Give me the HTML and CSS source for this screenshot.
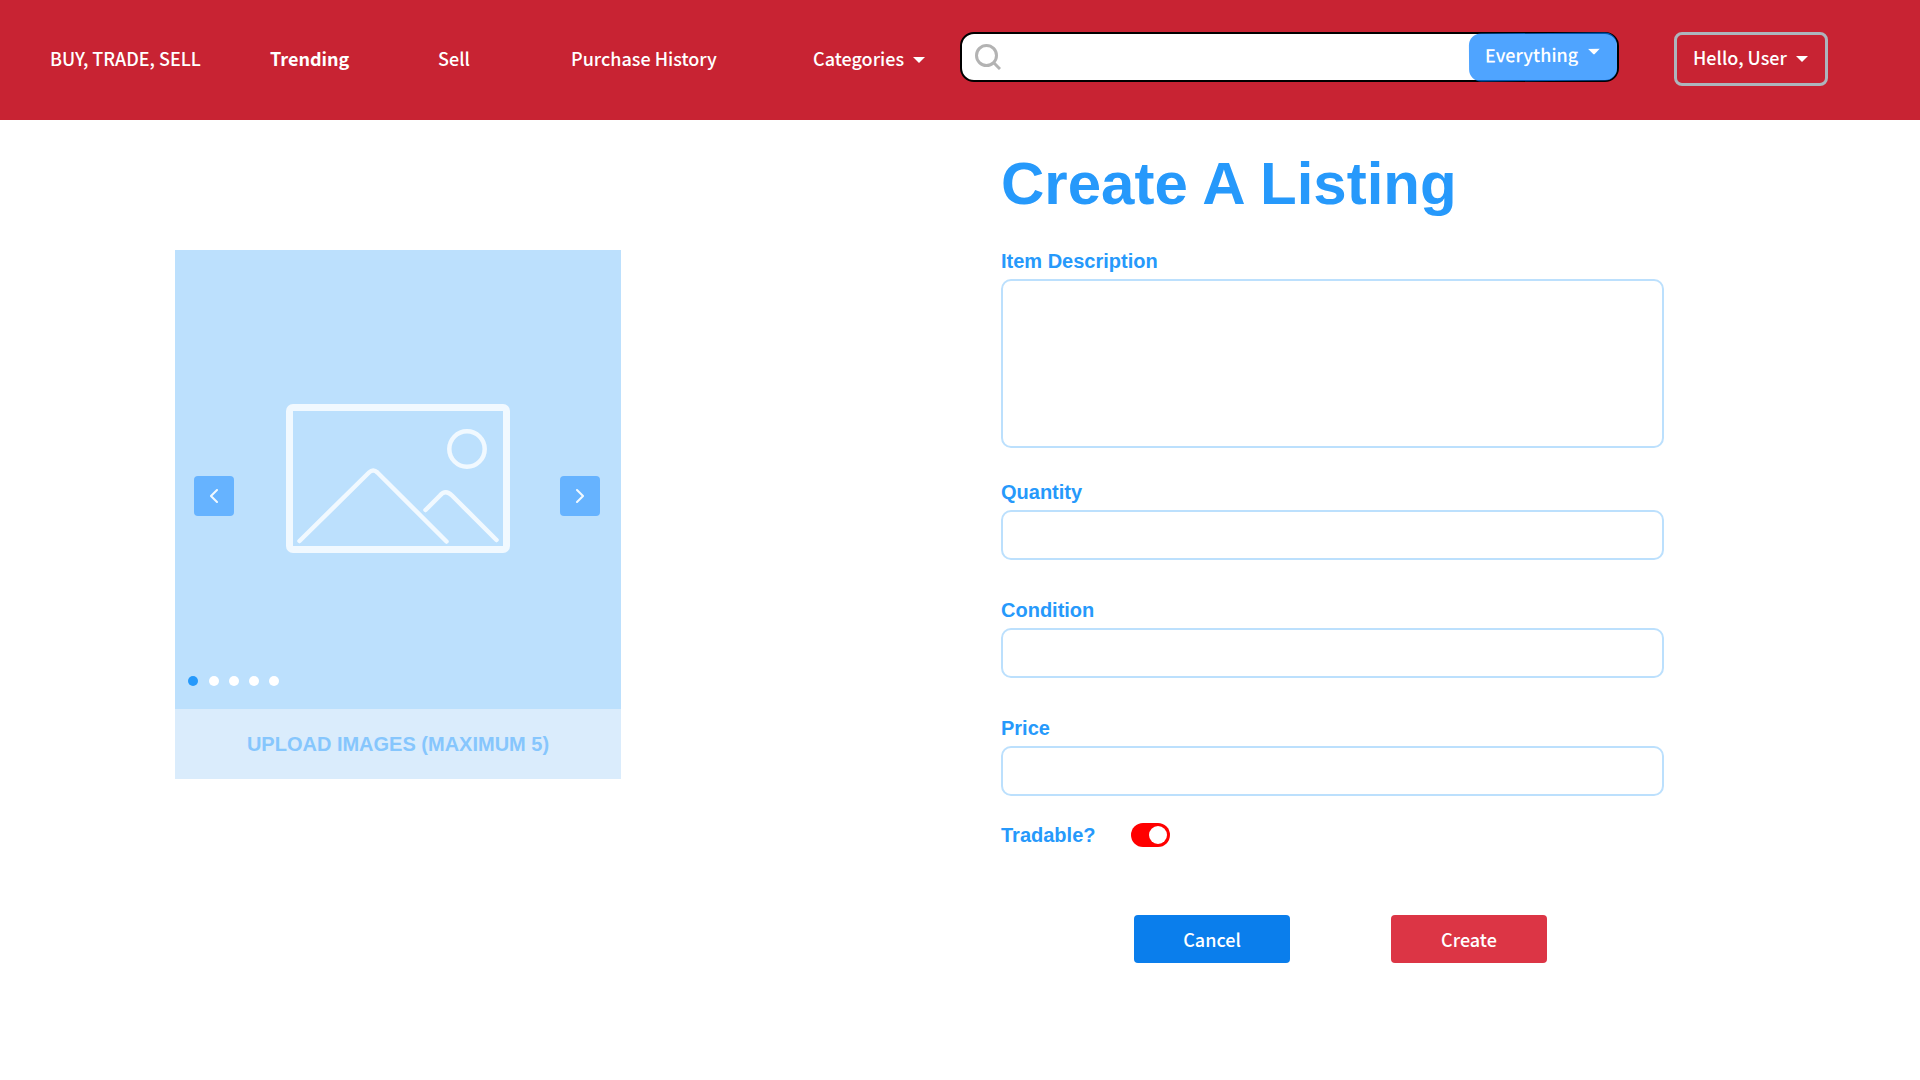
FILE: index.html
```html
<!DOCTYPE html>
<html lang="en">
<head>
<meta charset="utf-8">
<meta name="viewport" content="width=device-width, initial-scale=1">
<title>Create A Listing</title>
<link rel="stylesheet" href="styles.css">
</head>
<body>
<header class="topbar">
  <nav class="nav">
    <a class="nav-link" href="#">BUY, TRADE, SELL</a>
    <a class="nav-link nav-link-active" href="#">Trending</a>
    <a class="nav-link" href="#">Sell</a>
    <a class="nav-link" href="#">Purchase History</a>
    <button class="nav-link menu-button" type="button">Categories
      <svg class="caret" viewBox="0 0 12 6" aria-hidden="true"><path d="M0 0h12L6 6z"/></svg>
    </button>
  </nav>
  <form class="search" role="search">
    <svg class="search-icon" viewBox="0 0 26 26" fill="none" aria-hidden="true"><circle cx="11.500" cy="11.500" r="10"/><path d="M18.500 18.500l6.500 6.500"/></svg>
    <input class="search-input" type="search" aria-label="Search">
    <div class="scope">
      <select class="scope-select" aria-label="Search in"><option>Everything</option></select>
      <svg class="caret scope-caret" viewBox="0 0 12 6" aria-hidden="true"><path d="M0 0h12L6 6z"/></svg>
    </div>
  </form>
  <button class="user-button menu-button" type="button">Hello, User
    <svg class="caret" viewBox="0 0 12 6" aria-hidden="true"><path d="M0 0h12L6 6z"/></svg>
  </button>
</header>
<main class="page">
  <section class="gallery">
    <div class="slide">
      <svg class="placeholder" viewBox="0 0 224 150" fill="none" aria-hidden="true">
        <rect x="3.500" y="3.500" width="217" height="142" rx="3.500" stroke-width="7"/>
        <circle cx="181" cy="45" r="17.700"/>
        <path d="M13.500 137L83 68.500Q87.200 64.500 91.400 68.500L160.500 137.500"/>
        <path d="M139.500 106L154 91.500Q159.500 85 166 91.500L210.500 136"/>
      </svg>
      <button class="arrow arrow-prev" type="button" aria-label="Previous image">
        <svg class="chevron" viewBox="0 0 8 14" fill="none"><path d="M7 1L1 7l6 6"/></svg>
      </button>
      <button class="arrow arrow-next" type="button" aria-label="Next image">
        <svg class="chevron" viewBox="0 0 8 14" fill="none"><path d="M1 1l6 6-6 6"/></svg>
      </button>
      <div class="dots">
        <button class="dot dot-active" type="button" aria-label="Image 1"></button>
        <button class="dot" type="button" aria-label="Image 2"></button>
        <button class="dot" type="button" aria-label="Image 3"></button>
        <button class="dot" type="button" aria-label="Image 4"></button>
        <button class="dot" type="button" aria-label="Image 5"></button>
      </div>
    </div>
    <button class="upload" type="button">UPLOAD IMAGES (MAXIMUM 5)</button>
  </section>
  <form class="listing">
    <h1 class="title">Create A Listing</h1>
    <div class="field">
      <label class="label" for="description">Item Description</label>
      <textarea class="control control-tall" id="description"></textarea>
    </div>
    <div class="field">
      <label class="label" for="quantity">Quantity</label>
      <input class="control" id="quantity" type="text">
    </div>
    <div class="field">
      <label class="label" for="condition">Condition</label>
      <input class="control" id="condition" type="text">
    </div>
    <div class="field">
      <label class="label" for="price">Price</label>
      <input class="control" id="price" type="text">
    </div>
    <div class="toggle-row">
      <label class="label" for="tradable">Tradable?</label>
      <input class="toggle" id="tradable" type="checkbox" role="switch" checked>
    </div>
    <div class="actions">
      <button class="button button-cancel" type="button">Cancel</button>
      <button class="button button-create" type="button">Create</button>
    </div>
  </form>
</main>
</body>
</html>
```
FILE: styles.css
```css
* { box-sizing: border-box; }

body {
  margin: 0;
  background: #fff;
  color: #2699fb;
  font: 20px/24px "Liberation Sans", Arial, sans-serif;
}

button, select, input, textarea { font: inherit; margin: 0; }
button { padding: 0; border: 0; cursor: pointer; }

/* Top bar */
.topbar {
  display: flex;
  align-items: flex-start;
  min-height: 120px;
  padding: 32px 92px 32px 50px;
  background: #c82333;
  color: #fff;
  font: 500 18px/24px "Noto Sans CJK SC", sans-serif;
}

.nav {
  display: grid;
  grid-template-columns: 220px 168px 133px 242px 147px;
  align-items: center;
  height: 52px;
}

.nav-link {
  color: #fff;
  text-decoration: none;
  white-space: nowrap;
}

.nav-link-active { font-weight: 700; }

.menu-button {
  display: flex;
  align-items: center;
  gap: 9px;
  background: none;
  color: #fff;
  white-space: nowrap;
}

.caret {
  width: 12px;
  height: 6px;
  margin-top: 4px;
  fill: #fff;
}

.search {
  display: flex;
  flex: 1;
  align-items: center;
  min-width: 300px;
  height: 50px;
  margin-right: 55px;
  padding-left: 13px;
  border: 2px solid #000;
  border-radius: 14px;
  background: #fff;
}

.search-icon {
  width: 26px;
  height: 26px;
  stroke: #b3b3b3;
  stroke-width: 3;
}

.search-input {
  flex: 1;
  min-width: 0;
  height: 44px;
  border: 0;
  outline: 0;
  background: none;
}

.scope {
  position: relative;
  width: 148px;
  height: 48px;
  border-radius: 12px;
  background: rgba(0, 123, 255, 0.69);
  transform: rotate(-0.4deg);
}

.scope-select {
  display: block;
  width: 100%;
  height: 42px;
  padding: 0 0 0 16px;
  border: 0;
  appearance: none;
  background: none;
  color: #fff;
}

.scope-caret {
  position: absolute;
  top: 12px;
  right: 17px;
}

.user-button {
  width: 154px;
  height: 54px;
  padding: 0 0 5px 16px;
  border: 3px solid #adb5bd;
  border-radius: 8px;
}

/* Page columns */
.page {
  display: grid;
  grid-template-columns: minmax(0, 1001fr) minmax(0, 919fr);
  align-items: start;
  padding: 30px 0 60px;
}

.gallery {
  max-width: 446px;
  width: 100%;
  margin: 100px 0 0 175px;
}

.slide {
  position: relative;
  display: flex;
  align-items: center;
  justify-content: center;
  height: 459px;
  padding-bottom: 2px;
  background: #bce0fd;
}

.placeholder {
  width: 224px;
  height: 150px;
  stroke: #f1f9ff;
  stroke-width: 4.5;
  stroke-linecap: round;
}

.arrow {
  position: absolute;
  top: 226px;
  display: flex;
  align-items: center;
  justify-content: center;
  width: 40px;
  height: 40px;
  border-radius: 4px;
  background: #66b3ff;
}

.arrow-prev { left: 19px; }
.arrow-next { right: 21px; }

.chevron {
  width: 8px;
  height: 14px;
  stroke: #f1f9ff;
  stroke-width: 2;
  stroke-linecap: round;
}

.dots {
  position: absolute;
  bottom: 23px;
  left: 13px;
  display: flex;
  gap: 10px;
}

.dot {
  width: 10px;
  height: 10px;
  border-radius: 50%;
  background: #fff;
}

.dot-active {
  margin-right: 1px;
  background: #2699fb;
}

.upload {
  width: 100%;
  height: 70px;
  background: #daecfc;
  color: #86c6fd;
  font-weight: 700;
}

/* Listing form */
.listing { max-width: 663px; }

.title {
  margin: 0 0 31px;
  font-size: 60px;
  line-height: 68px;
}

.field {
  display: flex;
  flex-direction: column;
  gap: 6px;
  margin-bottom: 38px;
}

.field:has(.control-tall) { margin-bottom: 32px; }

.label { font-weight: 700; }

.control {
  width: 100%;
  height: 50px;
  padding: 0 14px;
  border: 2px solid #bce0fd;
  border-radius: 10px;
  outline: 0;
  background: #fff;
  color: #2699fb;
}

.control-tall {
  height: 169px;
  padding: 12px 14px;
  resize: none;
}

.toggle-row {
  display: flex;
  gap: 36px;
  margin: -11px 0 68px;
}

.toggle {
  display: flex;
  justify-content: flex-end;
  width: 39px;
  height: 24px;
  padding: 3px;
  border-radius: 12px;
  appearance: none;
  background: #f00;
}

.toggle::before {
  content: "";
  width: 18px;
  height: 18px;
  border-radius: 50%;
  background: #fff;
}

.toggle:not(:checked) { justify-content: flex-start; }

.actions {
  display: flex;
  gap: 101px;
  padding-left: 133px;
}

.button {
  width: 156px;
  height: 48px;
  border-radius: 4px;
  color: #fff;
  font: 500 18px/24px "Noto Sans CJK SC", sans-serif;
}

.button-cancel { background: #0a7eec; }
.button-create { background: #dc3545; }
```
